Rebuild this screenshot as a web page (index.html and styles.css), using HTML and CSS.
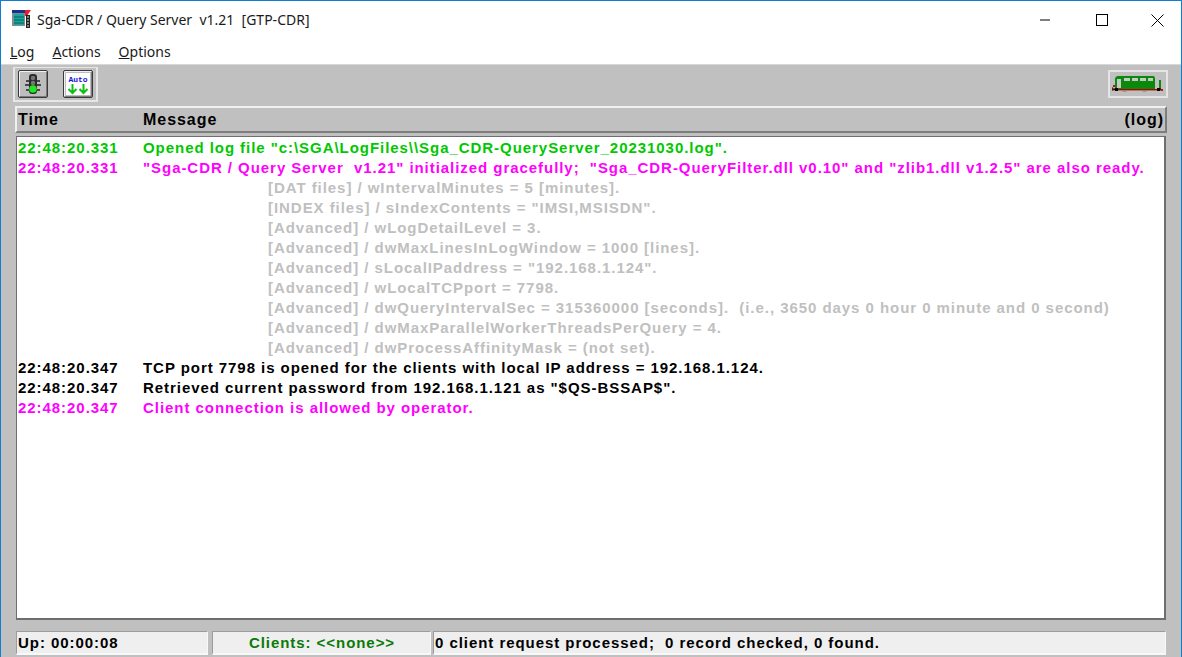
FILE: index.html
```html
<!DOCTYPE html>
<html lang="en">
<head>
<meta charset="utf-8">
<title>Sga-CDR / Query Server v1.21 [GTP-CDR]</title>
<link rel="stylesheet" href="styles.css">
</head>
<body>
<div class="window">
  <header class="titlebar">
    <svg class="app-icon" width="20" height="20" viewBox="0 0 20 20">
      <rect x="1" y="1" width="15" height="4" fill="#1c2f8f"/>
      <path d="M14 1h6l-4 6h-2z" fill="#e8202a"/>
      <rect x="1" y="4" width="13" height="13" fill="#7d8f94"/>
      <rect x="3" y="5" width="10" height="11" fill="#18a8a0"/>
      <path d="M3 8h10M3 11h10M3 14h10" stroke="#0b5a5a" stroke-width="1"/>
      <rect x="15" y="6" width="4" height="13" fill="#222"/>
      <path d="M16 8h2M16 11h2M16 14h2M16 17h2" stroke="#ddd" stroke-width="1"/>
    </svg>
    <span class="title-text">Sga-CDR / Query Server&nbsp; v1.21&nbsp; [GTP-CDR]</span>
    <div class="win-controls">
      <svg class="win-btn" width="46" height="38" viewBox="0 0 46 38"><path d="M18 19h10" stroke="#000" fill="none"/></svg>
      <svg class="win-btn" width="46" height="38" viewBox="0 0 46 38"><rect x="18.5" y="13.5" width="11" height="11" stroke="#000" fill="none"/></svg>
      <svg class="win-btn" width="46" height="38" viewBox="0 0 46 38"><path d="M17.5 13.5l12 12M29.5 13.5l-12 12" stroke="#000" fill="none"/></svg>
    </div>
  </header>
  <nav class="menubar">
    <span class="menu-item"><u>L</u>og</span>
    <span class="menu-item"><u>A</u>ctions</span>
    <span class="menu-item"><u>O</u>ptions</span>
  </nav>
  <main class="client">
    <div class="toolbar-row">
      <div class="toolbar">
        <button class="tool-btn" type="button">
          <svg width="24" height="23" viewBox="0 0 24 23">
            <path d="M5 9h14M4 13h16M5 18h14" stroke="#222" stroke-width="1.3"/>
            <rect x="8" y="2" width="8" height="20" rx="3" fill="#2b2b2b"/>
            <circle cx="12" cy="6" r="2.2" fill="#777"/>
            <circle cx="12" cy="11" r="2.2" fill="#777"/>
            <circle cx="12" cy="17" r="3.8" fill="#1fe81f"/>
          </svg>
        </button>
        <button class="tool-btn auto-btn" type="button">
          <svg width="24" height="22" viewBox="0 0 24 22">
            <rect width="24" height="22" fill="#fff"/>
            <text x="12" y="8.5" class="auto-label" text-anchor="middle">Auto</text>
            <path d="M6.5 11v9M2.5 16l4 4 4-4M17.5 11v9M13.5 16l4 4 4-4" stroke="#0fc20f" stroke-width="2" fill="none"/>
          </svg>
        </button>
      </div>
      <div class="train-box">
        <svg width="52" height="20" viewBox="0 0 52 20">
          <path d="M5 2h37l1 2v11H3V4z" fill="#0a8a0a"/>
          <rect x="5" y="5" width="4" height="9" fill="#c8c8c8"/>
          <path d="M12 4h6v3h-6zM20 4h6v3h-6zM28 4h6v3h-6zM36 4h5v3h-5z" fill="#c8c8c8"/>
          <rect x="47" y="6" width="2" height="10" fill="#0a8a0a"/>
          <rect x="1" y="15" width="50" height="1.4" fill="#b00000"/>
          <path d="M0 13v4M0 15h3M45 15h4" stroke="#000"/>
          <rect x="45" y="14" width="3" height="3" fill="#000"/>
          <rect x="1" y="11" width="2" height="2" fill="#e00000"/>
          <rect x="49" y="15" width="2" height="2" fill="#e00000"/>
          <rect x="3" y="14" width="3" height="3" fill="#000"/>
          <path d="M10 17h5l-1 1h-3zM30 17h5l-1 1h-3z" fill="#999"/>
        </svg>
      </div>
    </div>
    <div class="list-header">
      <span class="col-time">Time</span>
      <span class="col-msg">Message</span>
      <span class="col-log">(log)</span>
    </div>
    <div class="log-panel">
      <div class="row green"><span class="col-time">22:48:20.331</span><span class="col-msg">Opened log file "c:\SGA\LogFiles\\Sga_CDR-QueryServer_20231030.log".</span></div>
      <div class="row magenta"><span class="col-time">22:48:20.331</span><span class="col-msg">"Sga-CDR / Query Server&nbsp; v1.21" initialized gracefully;&nbsp; "Sga_CDR-QueryFilter.dll v0.10" and "zlib1.dll v1.2.5" are also ready.</span></div>
      <div class="row detail">[DAT files] / wIntervalMinutes = 5 [minutes].</div>
      <div class="row detail">[INDEX files] / sIndexContents = "IMSI,MSISDN".</div>
      <div class="row detail">[Advanced] / wLogDetailLevel = 3.</div>
      <div class="row detail">[Advanced] / dwMaxLinesInLogWindow = 1000 [lines].</div>
      <div class="row detail">[Advanced] / sLocalIPaddress = "192.168.1.124".</div>
      <div class="row detail">[Advanced] / wLocalTCPport = 7798.</div>
      <div class="row detail">[Advanced] / dwQueryIntervalSec = 315360000 [seconds].&nbsp; (i.e., 3650 days 0 hour 0 minute and 0 second)</div>
      <div class="row detail">[Advanced] / dwMaxParallelWorkerThreadsPerQuery = 4.</div>
      <div class="row detail">[Advanced] / dwProcessAffinityMask = (not set).</div>
      <div class="row"><span class="col-time">22:48:20.347</span><span class="col-msg">TCP port 7798 is opened for the clients with local IP address = 192.168.1.124.</span></div>
      <div class="row"><span class="col-time">22:48:20.347</span><span class="col-msg">Retrieved current password from 192.168.1.121 as "$QS-BSSAP$".</span></div>
      <div class="row magenta"><span class="col-time">22:48:20.347</span><span class="col-msg">Client connection is allowed by operator.</span></div>
    </div>
    <footer class="statusbar">
      <div class="status-cell status-up">Up: 00:00:08</div>
      <div class="status-cell status-clients">Clients: &lt;&lt;none&gt;&gt;</div>
      <div class="status-cell status-info">0 client request processed;&nbsp; 0 record checked, 0 found.</div>
    </footer>
  </main>
</div>
</body>
</html>
```
FILE: styles.css
```css
* { box-sizing: border-box; }
html, body { margin: 0; height: 100%; overflow: hidden; }
body { font-family: "Liberation Sans", Arial, sans-serif; color: #000; }

.window {
  width: 1182px;
  height: 657px;
  display: flex;
  flex-direction: column;
  background: #fff;
  border: 1px solid #0f7fd4;
  border-bottom: 0;
}

.titlebar {
  height: 37px;
  flex: none;
  display: flex;
  align-items: center;
  padding-left: 10px;
}
.app-icon { flex: none; margin-right: 6px; margin-top: -1px; }
.title-text { font-size: 14.7px; color: #1a1a1a; white-space: nowrap; font-family: "Noto Sans", "Liberation Sans", sans-serif; font-size: 14px; }
.win-controls { margin-left: auto; display: flex; align-self: flex-start; }
.win-btn { display: block; flex: none; width: 46px; height: 38px; margin-left: 10px; }
.win-controls .win-btn:last-child { margin-right: 1px; }

.menubar {
  height: 26px;
  flex: none;
  display: flex;
  align-items: center;
  gap: 18px;
  padding-left: 9px;
  font-family: "Noto Sans", "Liberation Sans", sans-serif;
  font-size: 14px;
  color: #1a1a1a;
}

.client {
  flex: 1;
  min-height: 0;
  display: flex;
  flex-direction: column;
  background: #c0c0c0;
  padding: 1px 14px 4px 14px;
  border-top: 1px solid #d8d8d8;
  font-size: 15px;
  font-weight: 700;
  letter-spacing: 0.95px;
}

.toolbar-row { height: 36px; flex: none; display: flex; justify-content: space-between; align-items: center; }
.toolbar {
  width: 85px;
  height: 35px;
  margin-left: -2px;
  border: 1px solid #e6e6e6;
  border-width: 1px 2px 2px 2px;
  display: flex;
  align-items: center;
  gap: 15px;
  padding-left: 3px;
}
.tool-btn {
  width: 30px;
  height: 28px;
  padding: 0;
  display: flex;
  align-items: center;
  justify-content: center;
  background: #bdbdbd;
  border: 1px solid #3a3a3a;
  border-radius: 2px;
  box-shadow: inset 1px 1px 0 #f2f2f2, inset -1px -1px 0 #7a7a7a;
}
.auto-label { font-family: "Liberation Mono", monospace; font-size: 8px; font-weight: 700; fill: #1010e0; letter-spacing: 0; }
.train-box {
  width: 60px;
  height: 28px;
  margin-right: -1px;
  border: 2px solid #e4e4e4;
  display: flex;
  align-items: center;
  justify-content: center;
}

.list-header {
  height: 27px;
  flex: none;
  margin-top: 4px;
  display: flex;
  align-items: center;
  background: #c0c0c0;
  border: 2px solid;
  border-color: #f0f0f0 #7d7d7d #7d7d7d #f0f0f0;
  font-size: 16px;
  padding-top: 1px;
}
.list-header .col-time { margin-left: 1px; width: 125px; }
.col-time { flex: none; width: 125px; }
.col-log { margin-left: auto; margin-right: 1px; }

.log-panel {
  height: 484px;
  flex: none;
  margin: 3px 1px 0 1px;
  background: #fff;
  border: 1px solid #6e6e6e;
  border-width: 1px 2px 2px 1px;
  border-color: #6e6e6e;
  padding: 1px 0 0 1px;
  color: #000;
}
.row { height: 20px; line-height: 20px; display: flex; white-space: nowrap; }
.green { color: #00c800; }
.magenta { color: #ff00ff; }
.detail { color: #c0c0c0; padding-left: 250px; display: block; white-space: pre; }

.statusbar {
  height: 24px;
  flex: none;
  margin: 11px 1px 0 1px;
  display: flex;
  gap: 2px;
}
.status-cell {
  background: #efefef;
  border: 1px solid;
  border-width: 1px 1px 2px 1px;
  border-color: #9c9c9c #f8f8f8 #f8f8f8 #9c9c9c;
  line-height: 21px;
  padding-left: 1px;
  white-space: nowrap;
}
.status-up { width: 192px; }
.status-clients { width: 219px; margin-left: 2px; text-align: center; color: #0a7a0a; }
.status-info { flex: 1; }
```
